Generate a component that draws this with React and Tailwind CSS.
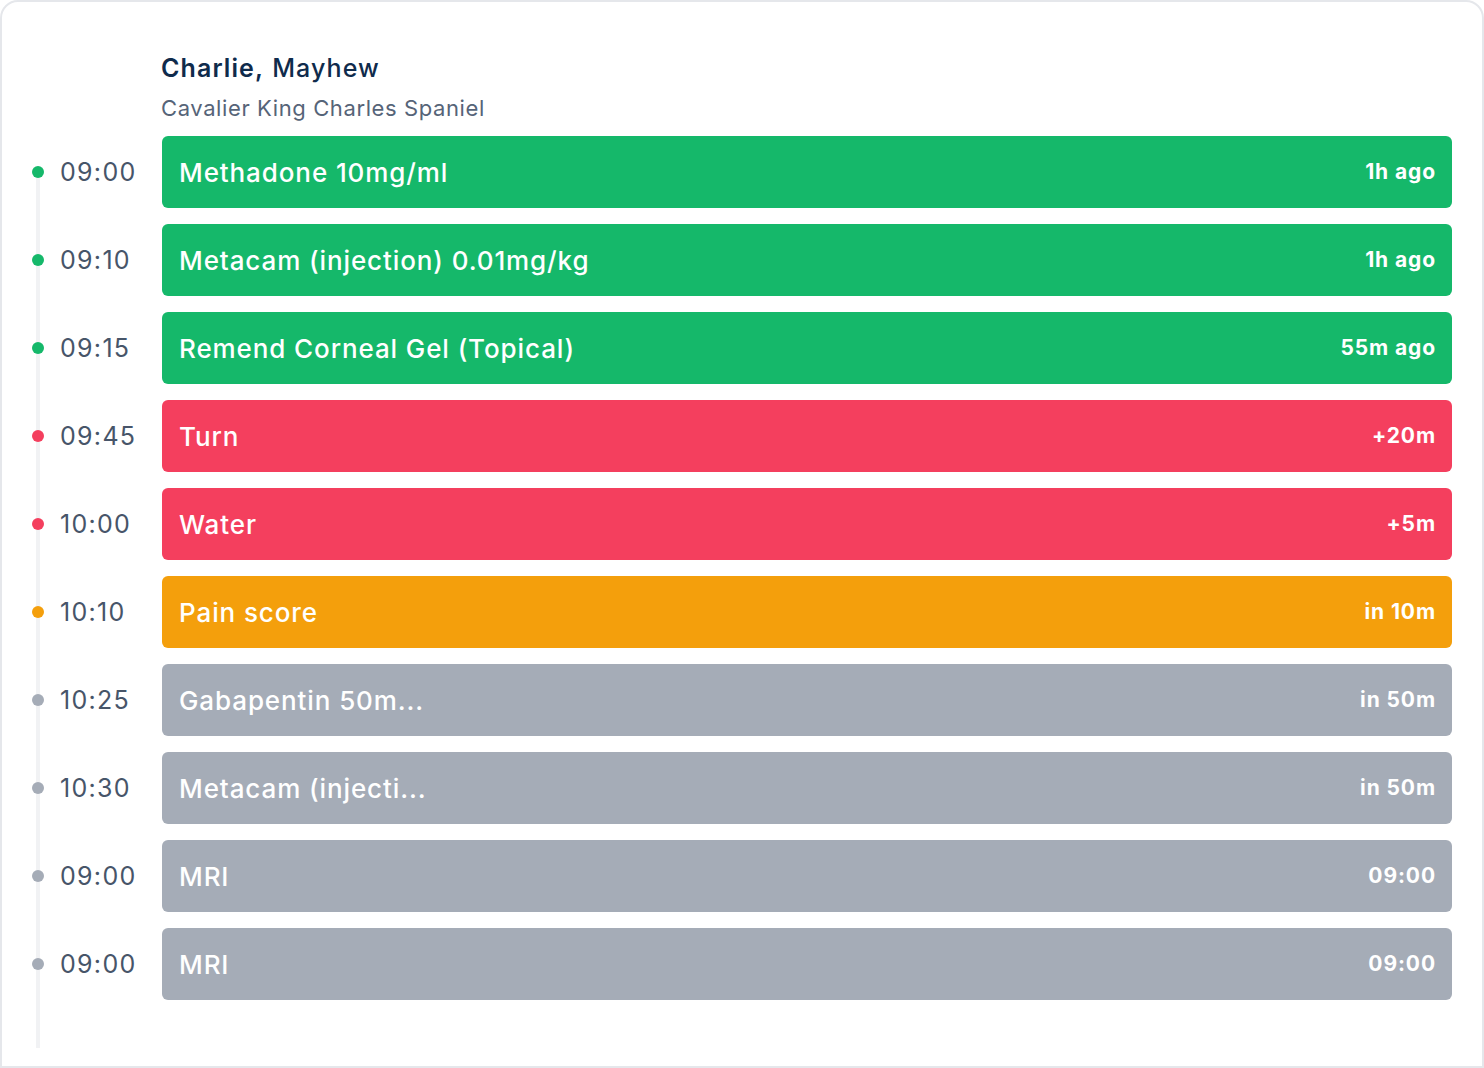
import React from "react";

const rows = [
  { time: "09:00", title: "Methadone 10mg/ml", right: "1h ago", c: "green" },
  { time: "09:10", title: "Metacam (injection) 0.01mg/kg", right: "1h ago", c: "green" },
  { time: "09:15", title: "Remend Corneal Gel (Topical)", right: "55m ago", c: "green" },
  { time: "09:45", title: "Turn", right: "+20m", c: "red" },
  { time: "10:00", title: "Water", right: "+5m", c: "red" },
  { time: "10:10", title: "Pain score", right: "in 10m", c: "orange" },
  { time: "10:25", title: "Gabapentin 50m...", right: "in 50m", c: "gray" },
  { time: "10:30", title: "Metacam (injecti...", right: "in 50m", c: "gray" },
  { time: "09:00", title: "MRI", right: "09:00", c: "gray" },
  { time: "09:00", title: "MRI", right: "09:00", c: "gray" },
];

const bar = {
  green: "bg-[#15b86a]",
  red: "bg-[#f43f5e]",
  orange: "bg-[#f49f0c]",
  gray: "bg-[#a5acb7]",
};
const dot = {
  green: "bg-[#15b86a]",
  red: "bg-[#f43f5e]",
  orange: "bg-[#f49f0c]",
  gray: "bg-[#a5acb7]",
};

export default function App() {
  return (
    <div
      className="w-[1484px] h-[1068px] bg-white"
      style={{ fontFamily: "Inter, 'Noto Sans', sans-serif" }}
    >
      <div className="h-full border-2 border-[#e5e7eb] rounded-tl-[18px] rounded-tr-[18px] pl-[28px] pr-[30px] pt-[48px]">
        <div className="ml-[131px]">
          <div className="text-[25px] leading-[36px] text-[#0f2b4c] tracking-[1.1px]">
            <span className="font-semibold">Charlie,</span>{" "}
            <span className="font-medium">Mayhew</span>
          </div>
          <div className="mt-[6px] text-[22px] leading-[32px] text-[#566478] tracking-[0.6px]">
            Cavalier King Charles Spaniel
          </div>
        </div>
        <div className="relative mt-[12px] pb-[48px]">
          <div className="absolute left-[6px] top-[36px] bottom-0 w-[4px] bg-[#f1f2f4]" />
          <div className="flex flex-col gap-[16px]">
            {rows.map((r, i) => (
              <div key={i} className="flex items-center h-[72px]">
                <div className="w-[132px] shrink-0 flex items-center">
                  <div className={`relative shrink-0 w-[12px] h-[12px] rounded-full ml-[2px] ${dot[r.c]}`} />
                  <div className="ml-[16px] pt-[2px] text-[25px] text-[#475569] tracking-[1.3px]">{r.time}</div>
                </div>
                <div
                  className={`flex-1 h-full rounded-[6px] flex items-center justify-between pl-[17px] pr-[16px] text-white ${bar[r.c]}`}
                >
                  <span className="text-[26px] font-medium tracking-[0.9px]">{r.title}</span>
                  <span className="text-[21px] font-bold tracking-[0.9px]">{r.right}</span>
                </div>
              </div>
            ))}
          </div>
        </div>
      </div>
    </div>
  );
}
